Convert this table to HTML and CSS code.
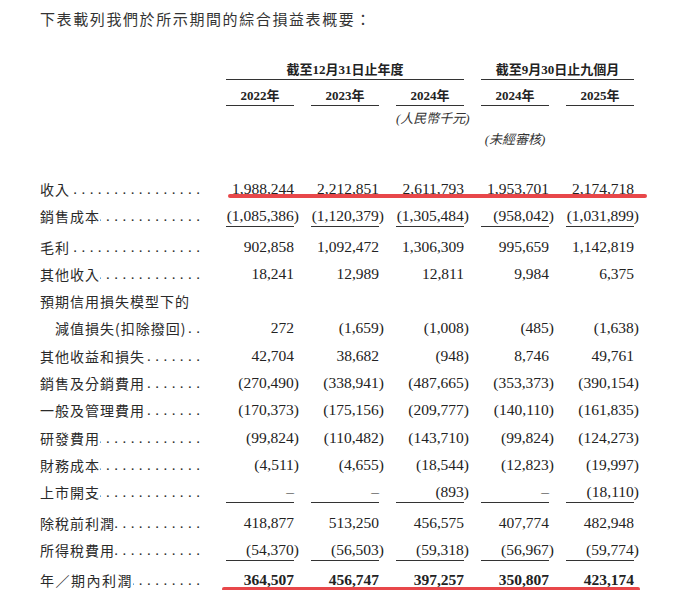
FILE: index.html
```html
<!DOCTYPE html>
<html lang="zh-Hant">
<head>
<meta charset="utf-8">
<title>綜合損益表概要</title>
<link rel="stylesheet" href="styles.css">
</head>
<body>
<div class="page">
  <p class="intro">下表載列我們於所示期間的綜合損益表概要：</p>

  <div class="grid hdr-groups">
    <div class="group g1">截至12月31日止年度</div>
    <div class="group g2">截至9月30日止九個月</div>
  </div>
  <div class="grid hdr-years">
    <div class="yr c1">2022年</div>
    <div class="yr c2">2023年</div>
    <div class="yr c3">2024年</div>
    <div class="yr c4">2024年</div>
    <div class="yr c5">2025年</div>
  </div>
  <div class="grid hdr-unit">
    <div class="note c3 unit">(人民幣千元)</div>
  </div>
  <div class="grid hdr-audit">
    <div class="note c4 audit">(未經審核)</div>
  </div>

  <div class="grid row">
    <div class="label"><span class="t">收入</span><span class="lead"></span></div>
    <div class="num">1,988,244</div><div class="num">2,212,851</div><div class="num">2,611,793</div><div class="num">1,953,701</div><div class="num">2,174,718</div>
  </div>
  <div class="grid row ul">
    <div class="label"><span class="t">銷售成本</span><span class="lead"></span></div>
    <div class="num">(1,085,386<span class="rp">)</span></div><div class="num">(1,120,379<span class="rp">)</span></div><div class="num">(1,305,484<span class="rp">)</span></div><div class="num">(958,042<span class="rp">)</span></div><div class="num">(1,031,899<span class="rp">)</span></div>
  </div>
  <div class="grid row">
    <div class="label"><span class="t">毛利</span><span class="lead"></span></div>
    <div class="num">902,858</div><div class="num">1,092,472</div><div class="num">1,306,309</div><div class="num">995,659</div><div class="num">1,142,819</div>
  </div>
  <div class="grid row">
    <div class="label"><span class="t">其他收入</span><span class="lead"></span></div>
    <div class="num">18,241</div><div class="num">12,989</div><div class="num">12,811</div><div class="num">9,984</div><div class="num">6,375</div>
  </div>
  <div class="grid row">
    <div class="label"><span class="t">預期信用損失模型下的</span></div>
  </div>
  <div class="grid row">
    <div class="label indent"><span class="t">減值損失(扣除撥回)</span><span class="lead"></span></div>
    <div class="num">272</div><div class="num">(1,659<span class="rp">)</span></div><div class="num">(1,008<span class="rp">)</span></div><div class="num">(485<span class="rp">)</span></div><div class="num">(1,638<span class="rp">)</span></div>
  </div>
  <div class="grid row">
    <div class="label"><span class="t">其他收益和損失</span><span class="lead"></span></div>
    <div class="num">42,704</div><div class="num">38,682</div><div class="num">(948<span class="rp">)</span></div><div class="num">8,746</div><div class="num">49,761</div>
  </div>
  <div class="grid row">
    <div class="label"><span class="t">銷售及分銷費用</span><span class="lead"></span></div>
    <div class="num">(270,490<span class="rp">)</span></div><div class="num">(338,941<span class="rp">)</span></div><div class="num">(487,665<span class="rp">)</span></div><div class="num">(353,373<span class="rp">)</span></div><div class="num">(390,154<span class="rp">)</span></div>
  </div>
  <div class="grid row">
    <div class="label"><span class="t">一般及管理費用</span><span class="lead"></span></div>
    <div class="num">(170,373<span class="rp">)</span></div><div class="num">(175,156<span class="rp">)</span></div><div class="num">(209,777<span class="rp">)</span></div><div class="num">(140,110<span class="rp">)</span></div><div class="num">(161,835<span class="rp">)</span></div>
  </div>
  <div class="grid row">
    <div class="label"><span class="t">研發費用</span><span class="lead"></span></div>
    <div class="num">(99,824<span class="rp">)</span></div><div class="num">(110,482<span class="rp">)</span></div><div class="num">(143,710<span class="rp">)</span></div><div class="num">(99,824<span class="rp">)</span></div><div class="num">(124,273<span class="rp">)</span></div>
  </div>
  <div class="grid row">
    <div class="label"><span class="t">財務成本</span><span class="lead"></span></div>
    <div class="num">(4,511<span class="rp">)</span></div><div class="num">(4,655<span class="rp">)</span></div><div class="num">(18,544<span class="rp">)</span></div><div class="num">(12,823<span class="rp">)</span></div><div class="num">(19,997<span class="rp">)</span></div>
  </div>
  <div class="grid row ul">
    <div class="label"><span class="t">上市開支</span><span class="lead"></span></div>
    <div class="num">–</div><div class="num">–</div><div class="num">(893<span class="rp">)</span></div><div class="num">–</div><div class="num">(18,110<span class="rp">)</span></div>
  </div>
  <div class="grid row">
    <div class="label"><span class="t">除稅前利潤</span><span class="lead"></span></div>
    <div class="num">418,877</div><div class="num">513,250</div><div class="num">456,575</div><div class="num">407,774</div><div class="num">482,948</div>
  </div>
  <div class="grid row ul">
    <div class="label"><span class="t">所得稅費用</span><span class="lead"></span></div>
    <div class="num">(54,370<span class="rp">)</span></div><div class="num">(56,503<span class="rp">)</span></div><div class="num">(59,318<span class="rp">)</span></div><div class="num">(56,967<span class="rp">)</span></div><div class="num">(59,774<span class="rp">)</span></div>
  </div>
  <div class="grid row total">
    <div class="label"><span class="t wide">年／期內利潤</span><span class="lead"></span></div>
    <div class="num">364,507</div><div class="num">456,747</div><div class="num">397,257</div><div class="num">350,807</div><div class="num">423,174</div>
  </div>

  <div class="mark m1"></div>
  <div class="mark m2"></div>
</div>
</body>
</html>
```

FILE: styles.css
```css
html, body {
  margin: 0;
  padding: 0;
  background: #ffffff;
}

.page {
  position: relative;
  padding: 9px 0 0 40px;
  color: #222222;
  font-family: "Liberation Serif", "Noto Sans CJK TC", serif;
}

.intro {
  margin: 0;
  font-family: "Noto Sans CJK TC", sans-serif;
  font-size: 15px;
  line-height: 20px;
  letter-spacing: 1.6px;
  color: #333333;
}

.grid {
  display: grid;
  grid-template-columns: 169px repeat(5, 68px);
  column-gap: 17px;
}

.c1 { grid-column: 2; }
.c2 { grid-column: 3; }
.c3 { grid-column: 4; }
.c4 { grid-column: 5; }
.c5 { grid-column: 6; }

.hdr-groups {
  margin-top: 32px;
}

.group {
  font-size: 13px;
  font-weight: bold;
  line-height: 18px;
  text-align: center;
  border-bottom: 1px solid #333333;
}

.g1 { grid-column: 2 / 5; }
.g2 { grid-column: 5 / 7; }

.hdr-years {
  margin-top: 7px;
}

.yr {
  font-size: 13px;
  font-weight: bold;
  line-height: 18px;
  text-align: center;
  border-bottom: 1px solid #333333;
}

.note {
  font-size: 13px;
  line-height: 18px;
  font-style: italic;
  white-space: nowrap;
  color: #333333;
}

.hdr-unit { margin-top: 4px; }
.hdr-audit { margin-top: 3px; margin-bottom: 22.7px; }

.unit { text-align: right; }
.audit { text-align: center; }

.row > div {
  padding-top: 7.3px;
  line-height: 20px;
}

.label {
  display: flex;
  padding-right: 9px;
  font-family: "Noto Sans CJK TC", sans-serif;
  font-size: 14px;
  letter-spacing: 1px;
  white-space: nowrap;
  color: #2a2a2a;
}

.label.indent {
  padding-left: 15px;
}

.label .t {
  flex: none;
}

.label .t.wide {
  letter-spacing: 1.5px;
}

.lead {
  flex: 1 1 0;
  min-width: 0;
  display: flex;
  justify-content: flex-end;
  overflow: hidden;
  font-family: "Liberation Serif", serif;
  font-size: 15px;
}

.lead::after {
  content: "..............................................";
  flex: none;
  letter-spacing: 4.45px;
  margin-right: -4.45px;
  white-space: nowrap;
}

.num {
  font-size: 15.5px;
  text-align: right;
  white-space: nowrap;
}

.rp {
  margin-right: -5px;
}

.row.ul {
  margin-bottom: 2px;
}

.row.ul .num {
  border-bottom: 1px solid #333333;
}

.row.total .num {
  font-weight: bold;
}

.mark {
  position: absolute;
  height: 4px;
  border-radius: 2px;
  background: #e8474a;
}

.m1 {
  left: 228px;
  top: 194px;
  width: 419px;
}

.m2 {
  left: 222px;
  top: 587px;
  width: 418px;
}
```
